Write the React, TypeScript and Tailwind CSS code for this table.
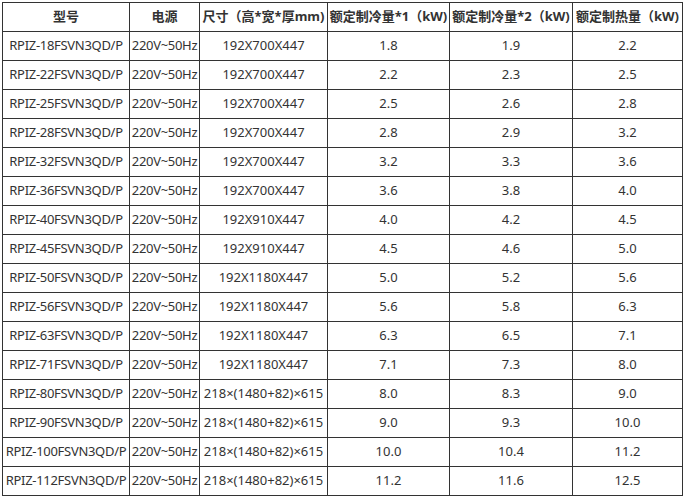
const rows: string[][] = [
  ["RPIZ-18FSVN3QD/P", "220V~50Hz", "192X700X447", "1.8", "1.9", "2.2"],
  ["RPIZ-22FSVN3QD/P", "220V~50Hz", "192X700X447", "2.2", "2.3", "2.5"],
  ["RPIZ-25FSVN3QD/P", "220V~50Hz", "192X700X447", "2.5", "2.6", "2.8"],
  ["RPIZ-28FSVN3QD/P", "220V~50Hz", "192X700X447", "2.8", "2.9", "3.2"],
  ["RPIZ-32FSVN3QD/P", "220V~50Hz", "192X700X447", "3.2", "3.3", "3.6"],
  ["RPIZ-36FSVN3QD/P", "220V~50Hz", "192X700X447", "3.6", "3.8", "4.0"],
  ["RPIZ-40FSVN3QD/P", "220V~50Hz", "192X910X447", "4.0", "4.2", "4.5"],
  ["RPIZ-45FSVN3QD/P", "220V~50Hz", "192X910X447", "4.5", "4.6", "5.0"],
  ["RPIZ-50FSVN3QD/P", "220V~50Hz", "192X1180X447", "5.0", "5.2", "5.6"],
  ["RPIZ-56FSVN3QD/P", "220V~50Hz", "192X1180X447", "5.6", "5.8", "6.3"],
  ["RPIZ-63FSVN3QD/P", "220V~50Hz", "192X1180X447", "6.3", "6.5", "7.1"],
  ["RPIZ-71FSVN3QD/P", "220V~50Hz", "192X1180X447", "7.1", "7.3", "8.0"],
  ["RPIZ-80FSVN3QD/P", "220V~50Hz", "218×(1480+82)×615", "8.0", "8.3", "9.0"],
  ["RPIZ-90FSVN3QD/P", "220V~50Hz", "218×(1480+82)×615", "9.0", "9.3", "10.0"],
  ["RPIZ-100FSVN3QD/P", "220V~50Hz", "218×(1480+82)×615", "10.0", "10.4", "11.2"],
  ["RPIZ-112FSVN3QD/P", "220V~50Hz", "218×(1480+82)×615", "11.2", "11.6", "12.5"],
]

const headers = ["型号", "电源", "尺寸（高*宽*厚mm)", "额定制冷量*1（kW)", "额定制冷量*2（kW)", "额定制热量（kW)"]

export default function App() {
  return (
    <div className="bg-white w-[685px] h-[499px] pt-[2px] pl-[2px] font-['Noto_Sans','Noto_Sans_CJK_SC',sans-serif] text-[13px] text-[#333]">
      <table className="table-fixed border-collapse w-[680px]">
        <colgroup>
          <col className="w-[127px]" />
          <col className="w-[70px]" />
          <col className="w-[128px]" />
          <col className="w-[122px]" />
          <col className="w-[123px]" />
          <col className="w-[110px]" />
        </colgroup>
        <thead>
          <tr className="h-[29px]">
            {headers.map((h) => (
              <th key={h} className="border border-[#333] p-0 font-bold whitespace-nowrap text-center">
                {h}
              </th>
            ))}
          </tr>
        </thead>
        <tbody>
          {rows.map((r) => (
            <tr key={r[0]} className="h-[29px]">
              {r.map((c, i) => (
                <td
                  key={i}
                  className={
                    i === 0
                      ? "border border-[#333] p-0 whitespace-nowrap text-center tracking-[-0.3px]"
                      : i === 1
                        ? "border border-[#333] p-0 whitespace-nowrap text-center tracking-[-0.3px]"
                        : "border border-[#333] p-0 whitespace-nowrap text-center"
                  }
                >
                  {c}
                </td>
              ))}
            </tr>
          ))}
        </tbody>
      </table>
    </div>
  )
}
